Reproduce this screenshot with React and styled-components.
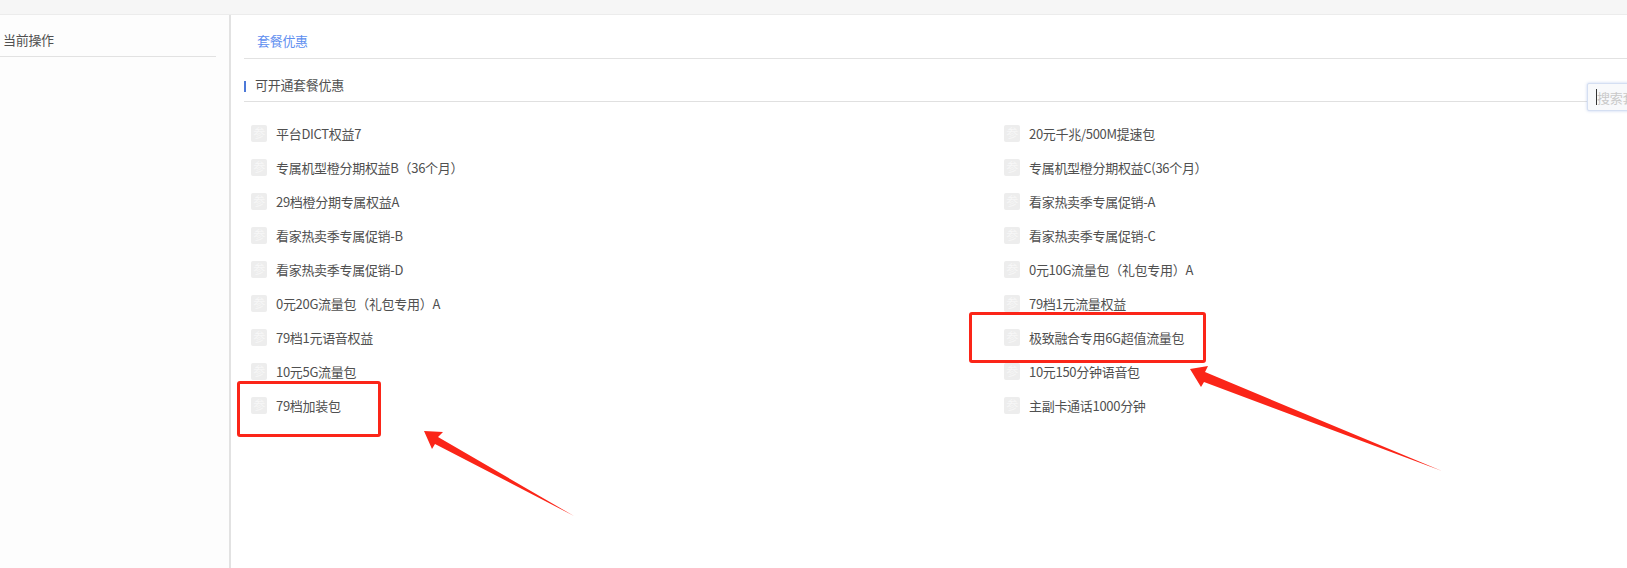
import React from "react";
import styled, { createGlobalStyle } from "styled-components";

const GlobalStyle = createGlobalStyle`
  html, body {
    margin: 0;
    padding: 0;
    background: #fff;
    overflow: hidden;
  }
  body {
    font-family: "Noto Sans CJK SC", "Liberation Sans", sans-serif;
    font-size: 13px;
    letter-spacing: -0.3px;
    color: #505050;
  }
`;

const Page = styled.div`
  position: relative;
  width: 1627px;
  height: 568px;
  overflow: hidden;
`;
const TopBar = styled.div`
  height: 14px;
  background: #f6f6f6;
  border-bottom: 1px solid #ececec;
`;
const Body = styled.div`
  display: flex;
  height: 553px;
`;
const Sidebar = styled.aside`
  width: 229px;
  flex-shrink: 0;
  border-right: 2px solid #e2e2e2;
  background: #fdfdfd;
`;
const SideTitle = styled.div`
  width: 216px;
  height: 42px;
  box-sizing: border-box;
  padding: 15px 0 0 3px;
  line-height: 19px;
  border-bottom: 1px solid #e2e2e2;
`;
const Main = styled.main`
  flex: 1;
  padding-left: 13px;
  min-width: 0;
`;
const TabBar = styled.div`
  height: 44px;
  box-sizing: border-box;
  padding: 16px 0 0 13px;
  line-height: 19px;
  color: #5f8ff0;
  border-bottom: 1px solid #e2e2e2;
`;
const SectionHead = styled.div`
  display: flex;
  align-items: center;
  width: 1343px;
  height: 43px;
  box-sizing: border-box;
  padding-top: 8px;
  border-bottom: 1px solid #e0e0e0;
`;
const SectionMark = styled.span`
  width: 2px;
  height: 11px;
  margin-right: 9px;
  margin-top: 5px;
  background: #4d79d8;
`;
const SectionTitle = styled.span`
  line-height: 19px;
`;
const List = styled.div`
  display: grid;
  grid-template-columns: 753px 1fr;
  grid-auto-rows: 34px;
  padding: 14px 0 0 7px;
`;
const Item = styled.div`
  display: flex;
  align-items: center;
  gap: 9px;
  white-space: nowrap;
`;
const ItemIcon = styled.span`
  display: flex;
  align-items: center;
  justify-content: center;
  width: 16px;
  height: 17px;
  border-radius: 2px;
  background: #ededed;
  color: #f7f7f7;
  font-size: 12px;
  line-height: 1;
`;
const SearchBox = styled.div`
  position: absolute;
  left: 1587px;
  top: 83px;
  width: 80px;
  height: 28px;
  display: flex;
  align-items: center;
  padding-left: 8px;
  box-sizing: border-box;
  background: #f8f9fb;
  border: 1px solid #d5dff2;
  border-radius: 2px;
  box-shadow: 0 0 3px rgba(120, 150, 220, 0.45);
  color: #c9c9c9;
  white-space: nowrap;
`;
const Caret = styled.span`
  width: 1px;
  height: 16px;
  background: #333;
`;
const Callout = styled.div`
  position: absolute;
  left: ${(p) => p.$left}px;
  top: ${(p) => p.$top}px;
  width: ${(p) => p.$width}px;
  height: ${(p) => p.$height}px;
  box-sizing: border-box;
  border: 3px solid #fb2518;
  border-radius: 3px;
`;
const Arrows = styled.svg`
  position: absolute;
  left: 0;
  top: 0;
  pointer-events: none;
`;

const leftItems = [
  "平台DICT权益7",
  "专属机型橙分期权益B（36个月）",
  "29档橙分期专属权益A",
  "看家热卖季专属促销-B",
  "看家热卖季专属促销-D",
  "0元20G流量包（礼包专用）A",
  "79档1元语音权益",
  "10元5G流量包",
  "79档加装包",
];
const rightItems = [
  "20元千兆/500M提速包",
  "专属机型橙分期权益C(36个月）",
  "看家热卖季专属促销-A",
  "看家热卖季专属促销-C",
  "0元10G流量包（礼包专用）A",
  "79档1元流量权益",
  "极致融合专用6G超值流量包",
  "10元150分钟语音包",
  "主副卡通话1000分钟",
];

const App = () => {
  return (
    <Page>
      <GlobalStyle />
      <TopBar />
      <Body>
        <Sidebar>
          <SideTitle>当前操作</SideTitle>
        </Sidebar>
        <Main>
          <TabBar>套餐优惠</TabBar>
          <SectionHead>
            <SectionMark />
            <SectionTitle>可开通套餐优惠</SectionTitle>
          </SectionHead>
          <List>
            {leftItems.map((name, i) => (
              <React.Fragment key={name}>
                <Item>
                  <ItemIcon>参</ItemIcon>
                  {name}
                </Item>
                <Item>
                  <ItemIcon>参</ItemIcon>
                  {rightItems[i]}
                </Item>
              </React.Fragment>
            ))}
          </List>
        </Main>
      </Body>
      <SearchBox>
        <Caret />
        搜索套餐
      </SearchBox>
      <Callout $left={237} $top={381} $width={144} $height={56} />
      <Callout $left={969} $top={312} $width={237} $height={51} />
      <Arrows width="1627" height="568" viewBox="0 0 1627 568">
        <path d="M424 431 L443 432 L438 437 L574 516 L435 444 L432 449 Z" fill="#fb2518" />
        <path d="M1190 369 L1208 366 L1205 372 L1442 471 L1204 382 L1201 387 Z" fill="#fb2518" />
      </Arrows>
    </Page>
  );
};

export default App;
